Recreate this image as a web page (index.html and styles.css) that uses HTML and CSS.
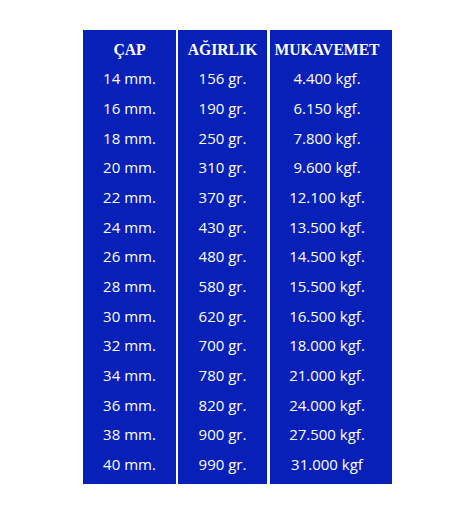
FILE: index.html
```html
<!DOCTYPE html>
<html lang="tr">
<head>
<meta charset="utf-8">
<link rel="stylesheet" href="styles.css">
</head>
<body>
<div class="table">
  <div class="col col-cap">
    <div class="cell head">ÇAP</div>
    <div class="cell">14 mm.</div>
    <div class="cell">16 mm.</div>
    <div class="cell">18 mm.</div>
    <div class="cell">20 mm.</div>
    <div class="cell">22 mm.</div>
    <div class="cell">24 mm.</div>
    <div class="cell">26 mm.</div>
    <div class="cell">28 mm.</div>
    <div class="cell">30 mm.</div>
    <div class="cell">32 mm.</div>
    <div class="cell">34 mm.</div>
    <div class="cell">36 mm.</div>
    <div class="cell">38 mm.</div>
    <div class="cell">40 mm.</div>
  </div>
  <div class="col col-weight">
    <div class="cell head">AĞIRLIK</div>
    <div class="cell">156 gr.</div>
    <div class="cell">190 gr.</div>
    <div class="cell">250 gr.</div>
    <div class="cell">310 gr.</div>
    <div class="cell">370 gr.</div>
    <div class="cell">430 gr.</div>
    <div class="cell">480 gr.</div>
    <div class="cell">580 gr.</div>
    <div class="cell">620 gr.</div>
    <div class="cell">700 gr.</div>
    <div class="cell">780 gr.</div>
    <div class="cell">820 gr.</div>
    <div class="cell">900 gr.</div>
    <div class="cell">990 gr.</div>
  </div>
  <div class="col col-strength">
    <div class="cell head">MUKAVEMET</div>
    <div class="cell">4.400 kgf.</div>
    <div class="cell">6.150 kgf.</div>
    <div class="cell">7.800 kgf.</div>
    <div class="cell">9.600 kgf.</div>
    <div class="cell">12.100 kgf.</div>
    <div class="cell">13.500 kgf.</div>
    <div class="cell">14.500 kgf.</div>
    <div class="cell">15.500 kgf.</div>
    <div class="cell">16.500 kgf.</div>
    <div class="cell">18.000 kgf.</div>
    <div class="cell">21.000 kgf.</div>
    <div class="cell">24.000 kgf.</div>
    <div class="cell">27.500 kgf.</div>
    <div class="cell">31.000 kgf</div>
  </div>
</div>
</body>
</html>
```

FILE: styles.css
```css
html, body {
  margin: 0;
  padding: 0;
  background: #ffffff;
}

.table {
  display: flex;
  gap: 2px;
  margin: 30px 0 0 83px;
}

.col {
  background: #0620b8;
  padding: 4.5px 0 4.5px;
  display: flex;
  flex-direction: column;
}

.col-cap { width: 93px; }
.col-weight { width: 89px; margin-right: 1px; }
.col-strength { width: 122px; }

.cell {
  height: 29.7px;
  line-height: 29.7px;
  text-align: center;
  color: #ffffff;
  font-family: "Open Sans", "Noto Sans", sans-serif;
  font-size: 15px;
  white-space: nowrap;
}

.col-strength .cell {
  padding-right: 8px;
}

.cell.head {
  font-family: "Liberation Serif", "Times New Roman", serif;
  font-weight: bold;
  font-size: 15.7px;
}
```
